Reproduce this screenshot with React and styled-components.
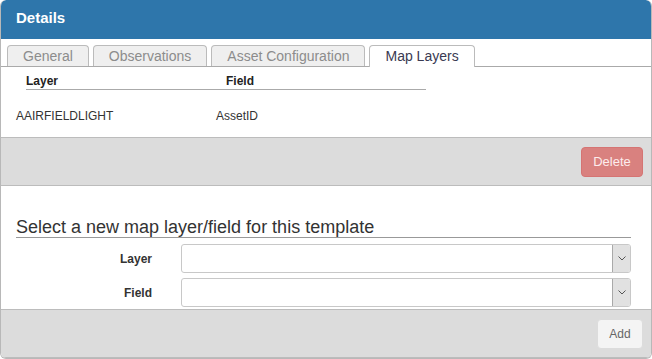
import React, { useState } from "react";
import styled, { createGlobalStyle } from "styled-components";

const Global = createGlobalStyle`
  html, body {
    margin: 0;
    padding: 0;
    background: #fff;
  }
  * { box-sizing: border-box; }
`;

const Panel = styled.div`
  width: 652px;
  height: 359px;
  border: 1px solid #b8b8b8;
  border-top: none;
  border-radius: 6px;
  overflow: hidden;
  font-family: "Liberation Sans", Arial, sans-serif;
  color: #333;
  display: flex;
  flex-direction: column;
  background: #fff;
`;

const Header = styled.div`
  height: 39px;
  margin: 0 -1px;
  background: #2e76ab;
  color: #fff;
  font-weight: bold;
  font-size: 15px;
  display: flex;
  align-items: center;
  padding: 0 0 3px 16px;
  border-radius: 6px 6px 0 0;
`;

const TabBar = styled.div`
  display: flex;
  gap: 4px;
  padding: 6px 0 0 6px;
  border-bottom: 1px solid #aaa;
  height: 28px;
`;

const Tab = styled.div`
  padding: 0 ${(p) => p.$pad}px;
  font-size: 14px;
  line-height: 21px;
  border: 1px solid #bbb;
  border-bottom: none;
  border-radius: 4px 4px 0 0;
  background: ${(p) => (p.$active ? "#fff" : "#efefef")};
  color: ${(p) => (p.$active ? "#3a3a52" : "#8c8c8c")};
  margin-bottom: ${(p) => (p.$active ? "-1px" : "0")};
  height: ${(p) => (p.$active ? "22px" : "21px")};
  cursor: pointer;
`;

const Table = styled.div`
  height: 71px;
`;

const HeadRow = styled.div`
  display: flex;
  width: 400px;
  margin-left: 25px;
  padding-top: 6px;
  border-bottom: 1px solid #aaa;
`;

const DataRow = styled.div`
  display: flex;
  width: 400px;
  margin: 18px 0 0 15px;
`;

const Cell = styled.div`
  width: 200px;
  font-size: 12px;
  line-height: 16px;
  font-weight: ${(p) => (p.$head ? "bold" : "normal")};
  color: ${(p) => (p.$head ? "#222" : "#333")};
`;

const Band = styled.div`
  display: flex;
  justify-content: flex-end;
  align-items: center;
  padding: 8px 8px;
  background: #dcdcdc;
  border-top: 1px solid #bcbcbc;
  border-bottom: 1px solid #bcbcbc;
  height: ${(p) => p.$h}px;
`;

const DeleteButton = styled.button`
  width: 62px;
  height: 30px;
  border: 1px solid #d57473;
  border-radius: 4px;
  background: #d9817f;
  color: #fdecec;
  font-family: inherit;
  font-size: 13px;
`;

const AddButton = styled.button`
  width: 46px;
  height: 30px;
  border: 1px solid #dcdcdc;
  border-radius: 4px;
  background: #f4f4f4;
  color: #666;
  font-family: inherit;
  font-size: 12px;
`;

const Form = styled.div`
  height: 123px;
  padding: 31px 20px 0 15px;
`;

const Title = styled.div`
  font-size: 18px;
  line-height: 20px;
  color: #333;
  border-bottom: 1px solid #999;
  margin-bottom: 6px;
`;

const FormRow = styled.div`
  display: flex;
  align-items: center;
  gap: 29px;
  margin-bottom: 5px;
`;

const Label = styled.div`
  width: 136px;
  text-align: right;
  font-size: 12px;
  font-weight: bold;
  color: #333;
`;

const Select = styled.div`
  flex: 1;
  height: 29px;
  border: 1px solid #c8c8c8;
  border-radius: 3px;
  display: flex;
  justify-content: flex-end;
  overflow: hidden;
`;

const Arrow = styled.div`
  width: 18px;
  background: #e1e1e1;
  border-left: 1px solid #a9a9a9;
  display: flex;
  align-items: center;
  justify-content: center;
`;

const tabs = [
  { name: "General", pad: 15 },
  { name: "Observations", pad: 15 },
  { name: "Asset Configuration", pad: 15 },
  { name: "Map Layers", pad: 15 },
];

function Chevron() {
  return (
    <svg width="8" height="5" viewBox="0 0 8 5">
      <path d="M0.5 0.5 L4 4 L7.5 0.5" fill="none" stroke="#555" strokeWidth="1" />
    </svg>
  );
}

export default function App() {
  const [active, setActive] = useState(3);
  return (
    <>
      <Global />
      <Panel>
        <Header>Details</Header>
        <TabBar>
          {tabs.map((t, i) => (
            <Tab key={t.name} $pad={t.pad} $active={i === active} onClick={() => setActive(i)}>
              {t.name}
            </Tab>
          ))}
        </TabBar>
        <Table>
          <HeadRow>
            <Cell $head>Layer</Cell>
            <Cell $head>Field</Cell>
          </HeadRow>
          <DataRow>
            <Cell>AAIRFIELDLIGHT</Cell>
            <Cell>AssetID</Cell>
          </DataRow>
        </Table>
        <Band $h={49}>
          <DeleteButton>Delete</DeleteButton>
        </Band>
        <Form>
          <Title>Select a new map layer/field for this template</Title>
          <FormRow>
            <Label>Layer</Label>
            <Select>
              <Arrow><Chevron /></Arrow>
            </Select>
          </FormRow>
          <FormRow>
            <Label>Field</Label>
            <Select>
              <Arrow><Chevron /></Arrow>
            </Select>
          </FormRow>
        </Form>
        <Band $h={49}>
          <AddButton>Add</AddButton>
        </Band>
      </Panel>
    </>
  );
}
